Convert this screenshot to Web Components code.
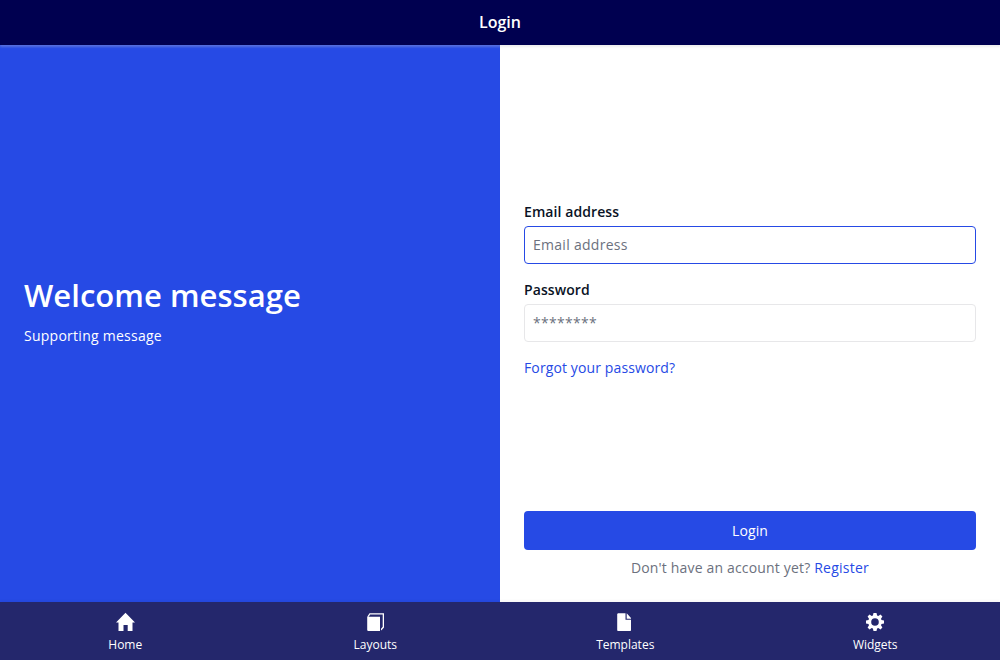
<!DOCTYPE html>
<html lang="en">
<head>
<meta charset="utf-8">
<title>Login</title>
<style>
html,body{margin:0;height:100%;overflow:hidden}
body{font:14px/20px "Open Sans",sans-serif;color:#0a1325;background:#fff}
</style>
</head>
<body>
<login-app></login-app>
<script>
const define = (name, html) => {
  const tpl = document.createElement('template');
  tpl.innerHTML = html;
  customElements.define(name, class extends HTMLElement {
    constructor() {
      super();
      this.attachShadow({mode: 'open'}).append(tpl.content.cloneNode(true));
    }
    connectedCallback() {
      const input = this.shadowRoot.querySelector('input');
      if (input) input.placeholder = this.getAttribute('placeholder');
    }
  });
};

define('app-header', `<style>
:host{display:flex;height:45px;flex:none;align-items:center;justify-content:center;box-sizing:border-box;padding-bottom:2px;background:#000050;color:#fff;box-shadow:0 2px 2px rgba(194,196,201,.3);z-index:1;position:relative}
h1{margin:0;font-size:16px;line-height:22px;font-weight:600}
</style><h1><slot></slot></h1>`);

define('welcome-panel', `<style>
:host{display:flex;flex:1 1 0;flex-direction:column;justify-content:center;background:#264ae5;color:#fff;padding:0 24px 28px;box-sizing:border-box}
h2{margin:0 0 10px;font-size:31px;line-height:42px;font-weight:600;letter-spacing:.04px}
p{margin:0;letter-spacing:.26px}
</style><h2><slot name="title"></slot></h2><p><slot></slot></p>`);

define('text-field', `<style>
:host{display:block;margin-bottom:16px}
label{display:block;font-weight:600;line-height:20px;margin-bottom:4px;letter-spacing:.08px}
input{display:block;box-sizing:border-box;width:100%;height:38px;padding:7px 8px 9px;border:1px solid var(--field-border,#e7e7e9);border-radius:4px;background:#fff;font:inherit;color:inherit;outline:0;letter-spacing:.28px}
input::placeholder{color:#6c717e;opacity:1}
</style><label><slot></slot></label><input type="text">`);

define('text-link', `<style>
:host{display:inline}
a{color:#264ae5;text-decoration:none}
</style><a href="#"><slot></slot></a>`);

define('action-button', `<style>
:host{display:block}
button{display:block;width:100%;height:39px;padding:0;border:0;border-radius:4px;background:#264ae5;color:#fff;font:inherit;letter-spacing:.1px}
</style><button type="button"><slot></slot></button>`);

define('login-panel', `<style>
:host{display:flex;flex:1 1 0;flex-direction:column;padding:24px;box-sizing:border-box;background:#fff}
.fields{flex:1;display:flex;flex-direction:column;justify-content:center}
.active{--field-border:#264ae5}
.forgot{letter-spacing:.12px}
.register{text-align:center;color:#6c717e;margin-top:8px;letter-spacing:.17px}
.register text-link{letter-spacing:.25px}
</style>
<div class="fields">
<text-field class="active" placeholder="Email address">Email address</text-field>
<text-field placeholder="********">Password</text-field>
<div class="forgot"><text-link>Forgot your password?</text-link></div>
</div>
<action-button>Login</action-button>
<div class="register">Don't have an account yet? <text-link>Register</text-link></div>`);

define('nav-item', `<style>
:host{display:flex;flex:1 1 0;flex-direction:column;align-items:center;padding-top:10px;color:#fff;font-size:12px;line-height:17px}
::slotted(svg){display:block;width:20px;height:20px;margin-bottom:4px;fill:#fff}
span{padding-left:.5px}
</style><slot name="icon"></slot><span><slot></slot></span>`);

define('bottom-nav', `<style>
:host{display:flex;height:58px;flex:none;background:#24276c;position:relative;box-shadow:0 -2px 2px rgba(0,0,0,.03)}
</style>
<nav-item><svg slot="icon" viewBox="0 0 20 20"><path d="M10.5 .7 20 10.5H17.5V19H12.7V13H8.5V19H3.5V10.5H1Z"/></svg>Home</nav-item>
<nav-item><svg slot="icon" viewBox="0 0 20 20"><path d="M2.2 4.8H15V19H3L2.2 18.2Z"/><path d="M2.2 4.8 4.5 1.2H19V15.5L16.5 18.2H16V16.7L17.7 14.7V2.6H5L3.9 4.8Z"/></svg>Layouts</nav-item>
<nav-item><svg slot="icon" viewBox="0 0 20 20"><path d="M2.2 2 3 1.2H10.5V7.8H16V18.5L15.3 19H2.7L2.2 18.3ZM11.7 1.2 16 6V6.7H11.7Z"/></svg>Templates</nav-item>
<nav-item><svg slot="icon" viewBox="0 0 20 20"><path fill-rule="evenodd" d="M8.5 1H11.5L12.1 3.5 13.3 4 15.5 2.6 17.4 4.5 16 6.7 16.5 7.9 19 8.5V11.5L16.5 12.1 16 13.3 17.4 15.5 15.5 17.4 13.3 16 12.1 16.5 11.5 19H8.5L7.9 16.5 6.7 16 4.5 17.4 2.6 15.5 4 13.3 3.5 12.1 1 11.5V8.5L3.5 7.9 4 6.7 2.6 4.5 4.5 2.6 6.7 4 7.9 3.5ZM10 6.2A3.8 3.8 0 1 0 10 13.8A3.8 3.8 0 1 0 10 6.2Z"/></svg>Widgets</nav-item>`);

define('login-app', `<style>
:host{display:flex;flex-direction:column;height:100vh}
main{display:flex;flex:1;min-height:0}
</style>
<app-header>Login</app-header>
<main>
<welcome-panel><span slot="title">Welcome message</span>Supporting message</welcome-panel>
<login-panel></login-panel>
</main>
<bottom-nav></bottom-nav>`);
</script>
</body>
</html>
